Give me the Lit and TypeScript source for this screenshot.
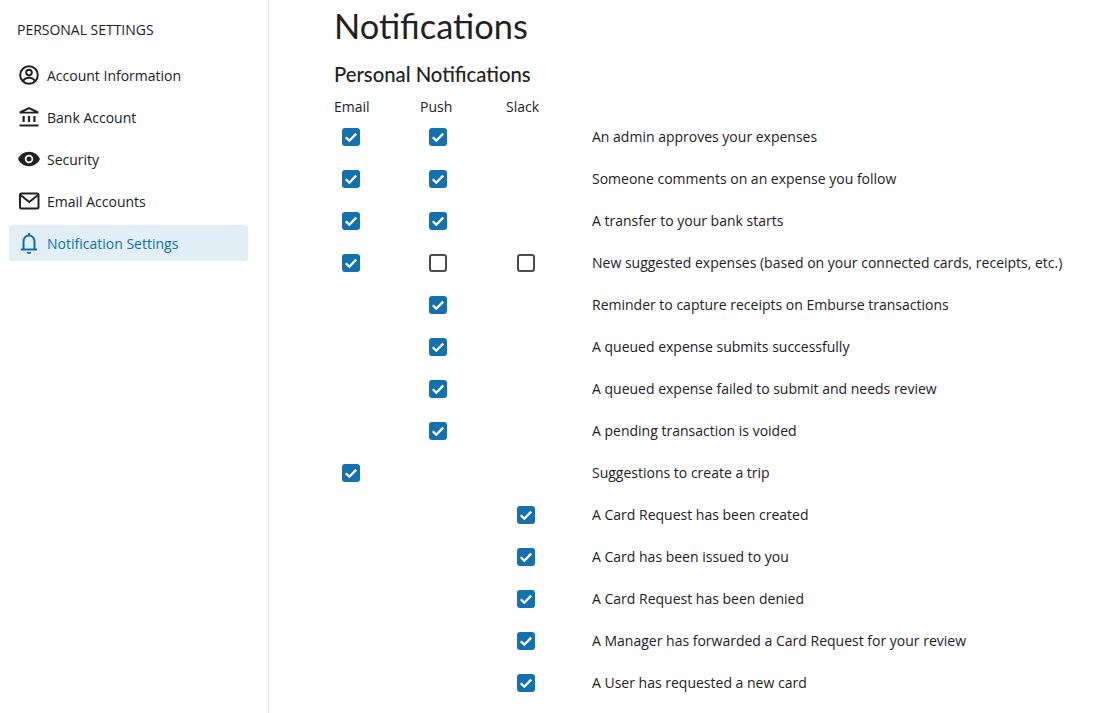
import { LitElement, html, css, svg } from "lit";
import { customElement } from "lit/decorators.js";

type Row = [number, number, number, string]; // 0 none, 1 checked, 2 unchecked
const rows: Row[] = [
  [1, 1, 0, "An admin approves your expenses"],
  [1, 1, 0, "Someone comments on an expense you follow"],
  [1, 1, 0, "A transfer to your bank starts"],
  [1, 2, 2, "New suggested expenses (based on your connected cards, receipts, etc.)"],
  [0, 1, 0, "Reminder to capture receipts on Emburse transactions"],
  [0, 1, 0, "A queued expense submits successfully"],
  [0, 1, 0, "A queued expense failed to submit and needs review"],
  [0, 1, 0, "A pending transaction is voided"],
  [1, 0, 0, "Suggestions to create a trip"],
  [0, 0, 1, "A Card Request has been created"],
  [0, 0, 1, "A Card has been issued to you"],
  [0, 0, 1, "A Card Request has been denied"],
  [0, 0, 1, "A Manager has forwarded a Card Request for your review"],
  [0, 0, 1, "A User has requested a new card"],
];

const icons = {
  account: svg`<circle cx="12" cy="12" r="8.800" fill="none" stroke="currentColor" stroke-width="2"/><circle cx="12" cy="9.600" r="2.800" fill="none" stroke="currentColor" stroke-width="2"/><path d="M5.800 18.200c1.400-2.400 3.600-3.500 6.200-3.500s4.800 1.100 6.200 3.500" fill="none" stroke="currentColor" stroke-width="2"/>`,
  bank: svg`<path d="M12 2 21.500 6.600V8.500H2.500V6.600z M7 6.700h10l-5-2.500z" fill="currentColor" fill-rule="evenodd"/><rect x="5.500" y="11" width="2.200" height="6" fill="currentColor"/><rect x="10.900" y="11" width="2.200" height="6" fill="currentColor"/><rect x="16.300" y="11" width="2.200" height="6" fill="currentColor"/><rect x="2.500" y="19.500" width="19" height="2" fill="currentColor"/>`,
  eye: svg`<path fill-rule="evenodd" d="M12 4.800c5 0 9.200 3 11 7.200-1.800 4.200-6 7.200-11 7.200S2.800 16.200 1 12c1.800-4.200 6-7.200 11-7.200zm0 3a4.200 4.200 0 1 0 0 8.400 4.200 4.200 0 0 0 0-8.400z" fill="currentColor"/><circle cx="12" cy="12" r="2.500" fill="currentColor"/>`,
  mail: svg`<rect x="3" y="4.500" width="18.500" height="15" rx="1.500" fill="none" stroke="currentColor" stroke-width="2"/><path d="M3.500 6l8.750 7 8.750-7" fill="none" stroke="currentColor" stroke-width="2"/>`,
  bell: svg`<path d="M4 18.500h16 M6.500 18.500v-8C6.500 7 9 4.500 12 4.500s5.500 2.500 5.500 6v8" fill="none" stroke="currentColor" stroke-width="2"/><rect x="11" y="2" width="2" height="3" fill="currentColor"/><path d="M10 21h4v.4a2 1.500 0 0 1-4 0z" fill="currentColor"/>`,
};

const nav: [keyof typeof icons, string, boolean][] = [
  ["account", "Account Information", false],
  ["bank", "Bank Account", false],
  ["eye", "Security", false],
  ["mail", "Email Accounts", false],
  ["bell", "Notification Settings", true],
];

@customElement("app-root")
export class AppRoot extends LitElement {
  static styles = css`
    :host {
      display: flex;
      width: 1102px;
      height: 713px;
      overflow: hidden;
      background: #fff;
      color: #222;
      font-family: "Open Sans", sans-serif;
      font-size: 14px;
    }
    .side {
      box-sizing: border-box;
      width: 269px;
      height: 713px;
      flex: none;
      border-right: 1px solid #dfe5ec;
      padding: 20px 20px 0 9px;
    }
    .side-title {
      height: 20px;
      line-height: 20px;
      padding-left: 8px;
      margin-bottom: 17px;
      letter-spacing: -0.02px;
    }
    .nav {
      display: flex;
      flex-direction: column;
      gap: 6px;
    }
    .item {
      display: flex;
      align-items: center;
      gap: 6px;
      height: 36px;
      padding-left: 8px;
      border-radius: 3px;
    }
    .item svg {
      width: 24px;
      height: 24px;
      flex: none;
    }
    .item.active {
      background: #e2eff6;
      color: #0f6fab;
    }
    .main {
      padding: 0 0 0 65px;
    }
    h1 {
      font-family: Lato, sans-serif;
      font-weight: 400;
      font-size: 34.4px;
      line-height: 44px;
      margin: 4px 0 0;
      color: #222;
    }
    h2 {
      font-family: Lato, sans-serif;
      font-weight: 500;
      font-size: 20.3px;
      line-height: 26px;
      margin: 13px 0 0;
      color: #222;
    }
    .head {
      display: grid;
      grid-template-columns: 86px 86px 86px;
      height: 39px;
      line-height: 39px;
      margin-bottom: -10px;
    }
    .grid {
      display: grid;
      grid-template-columns: 86px 86px 86px 1fr;
      grid-auto-rows: 42px;
      align-items: center;
    }
    .cell {
      display: flex;
      align-items: center;
    }
    .c0 { padding-left: 8px; }
    .c1 { padding-left: 9px; }
    .c2 { padding-left: 11px; }
    .cb {
      box-sizing: border-box;
      width: 18px;
      height: 18px;
      border-radius: 3px;
      display: block;
    }
    .cb.on {
      background: #1271ae;
    }
    .cb.off {
      border: 2px solid #4a4a4a;
    }
    .cb svg {
      display: block;
      width: 18px;
      height: 18px;
    }
    .label {
      white-space: nowrap;
      margin-top: -2px;
    }
  `;

  private box(v: number, i: number) {
    if (v === 0) return html`<div class="cell c${i}"></div>`;
    return html`<div class="cell c${i}">
      ${v === 1
        ? html`<span class="cb on"><svg viewBox="0 0 18 18"><path d="M3.800 9.200 7.300 12.700 14.200 5.600" fill="none" stroke="#fff" stroke-width="2.300"/></svg></span>`
        : html`<span class="cb off"></span>`}
    </div>`;
  }

  render() {
    return html`
      <aside class="side">
        <div class="side-title">PERSONAL SETTINGS</div>
        <nav class="nav">
          ${nav.map(
            ([ic, label, active]) => html`<div class="item ${active ? "active" : ""}">
              <svg viewBox="0 0 24 24">${icons[ic]}</svg><span>${label}</span>
            </div>`
          )}
        </nav>
      </aside>
      <main class="main">
        <h1>Notifications</h1>
        <h2>Personal Notifications</h2>
        <div class="head"><span>Email</span><span>Push</span><span>Slack</span></div>
        <div class="grid">
          ${rows.map(
            (r) => html`${this.box(r[0], 0)}${this.box(r[1], 1)}${this.box(r[2], 2)}<div class="label">${r[3]}</div>`
          )}
        </div>
      </main>
    `;
  }
}
